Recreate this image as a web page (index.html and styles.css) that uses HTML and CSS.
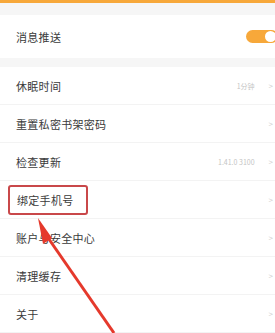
FILE: index.html
```html
<!DOCTYPE html>
<html lang="zh-CN">
<head>
    <meta charset="UTF-8">
    <title>设置</title>
    <link rel="stylesheet" href="styles.css">
</head>
<body>
    <div class="top-bar"></div>

    <div class="group first">
        <div class="row">
            <span class="label">消息推送</span>
            <span class="switch on"><span class="knob"></span></span>
        </div>
    </div>

    <div class="group">
        <div class="row">
            <span class="label">休眠时间</span>
            <span class="value">1分钟</span>
            <span class="chevron">&gt;</span>
        </div>
        <div class="row">
            <span class="label">重置私密书架密码</span>
            <span class="chevron">&gt;</span>
        </div>
        <div class="row">
            <span class="label">检查更新</span>
            <span class="value">1.41.0 3100</span>
            <span class="chevron">&gt;</span>
        </div>
        <div class="row">
            <span class="label highlight">绑定手机号</span>
            <span class="chevron">&gt;</span>
        </div>
        <div class="row">
            <span class="label">账户与安全中心</span>
            <span class="chevron">&gt;</span>
        </div>
        <div class="row">
            <span class="label">清理缓存</span>
            <span class="chevron">&gt;</span>
        </div>
        <div class="row">
            <span class="label">关于</span>
            <span class="chevron">&gt;</span>
        </div>
    </div>

    <!-- annotation arrow pointing at the phone binding row -->
    <svg class="pointer" width="275" height="333" viewBox="0 0 275 333">
        <line x1="44" y1="232" x2="114" y2="333" stroke="#e5392c" stroke-width="3"/>
        <polygon points="38,218 52,238 43,244" fill="#e5392c"/>
    </svg>
</body>
</html>
```

FILE: styles.css
```css
body {
    margin: 0;
    background-color: #f6f6f6;
    font-family: "Noto Sans CJK SC", "Liberation Sans", sans-serif;
    overflow: hidden;
    position: relative;
}
.top-bar {
    height: 3px;
    background-color: #f7a83a;
    margin-bottom: 12px;
}
.group {
    background-color: #fff;
}
.group.first {
    margin-bottom: 9px;
}
.group.first .row {
    height: 43px;
    border-bottom: none;
}
.row {
    display: flex;
    align-items: center;
    height: 38px;
    box-sizing: border-box;
    padding: 0 2px 0 16px;
    border-bottom: 1px solid #f3f3f3;
}
.label {
    flex: 1;
    font-size: 11px;
    color: #3a3a3a;
    letter-spacing: 0.3px;
}
.label.highlight {
    flex: none;
    margin-left: -8px;
    margin-right: auto;
    padding: 5px 12px 5px 7px;
    border: 2px solid #c9484a;
    border-radius: 3px;
}
.value {
    font-size: 7px;
    color: #c4c4c4;
    margin-right: 14px;
}
.chevron {
    font-size: 8px;
    color: #cfcfcf;
}
.switch {
    width: 32px;
    height: 13px;
    border-radius: 7px;
    background-color: #f7a83a;
    margin-right: -5px;
    display: flex;
    align-items: center;
    justify-content: flex-end;
}
.knob {
    width: 11px;
    height: 11px;
    border-radius: 50%;
    background-color: #fff;
    margin-right: 2px;
}
.pointer {
    position: absolute;
    left: 0;
    top: 0;
}
```
